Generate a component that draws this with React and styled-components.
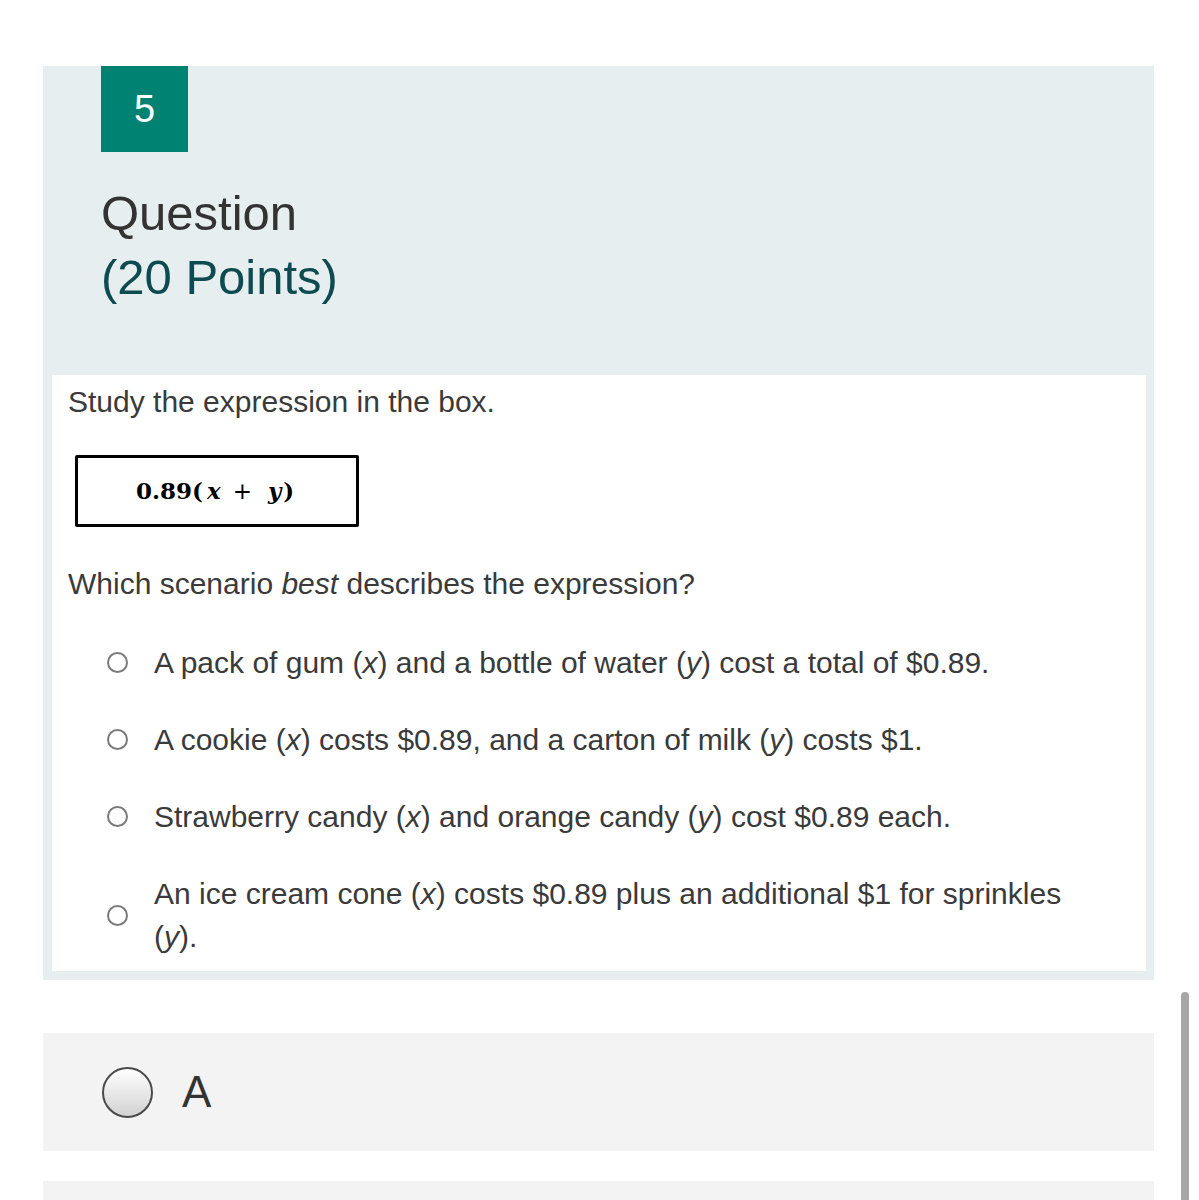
import React from 'react'
import styled, { createGlobalStyle } from 'styled-components';

const Global = createGlobalStyle`
    body {
        margin: 0;
        background: #ffffff;
        font-family: "Liberation Sans", Arial, sans-serif;
    }
`

const Page = styled.div`
    padding: 66px 45px 40px 43px;
    display: flex;
    flex-direction: column;
`

const Card = styled.div`
    background: #e6eeef;
    padding: 0 8px 9px 9px;
`

const Header = styled.div`
    padding: 0 0 66px 49px;
`

const Badge = styled.div`
    width: 87px;
    height: 86px;
    background: #008272;
    color: #ffffff;
    font-size: 38px;
    display: flex;
    align-items: center;
    justify-content: center;
`

const Title = styled.div`
    margin-top: 29px;
    font-size: 49px;
    line-height: 64px;
    color: #333333;
`

const Points = styled.div`
    color: #0d4b50;
`

const Body = styled.div`
    background: #ffffff;
    padding: 10px 16px 13px 16px;
    color: #3a3a3a;
    font-size: 30px;
    line-height: 34px;
`

const Expression = styled.div`
    margin: 36px 0 40px 7px;
    height: 66px;
    width: 220px;
    border: 3px solid #000000;
    border-radius: 2px;
    display: flex;
    align-items: center;
    padding-left: 58px;
    font-family: "DejaVu Serif", "Liberation Serif", serif;
    font-weight: 700;
    font-size: 23px;
    color: #000000;
`

const Var = styled.span`
    font-style: italic;
    margin: 0 ${p => p.$space}px 0 4px;
`

const Op = styled.span`
    font-family: "DejaVu Sans", sans-serif;
    font-weight: 400;
    margin-right: 12px;
`

const Options = styled.div`
    margin-top: 40px;
    display: flex;
    flex-direction: column;
    gap: 34px;
`

const Option = styled.div`
    display: flex;
    align-items: center;
    padding-left: 39px;
`

const SmallRadio = styled.span`
    flex: none;
    width: 17px;
    height: 17px;
    border: 2px solid #7a7a7a;
    border-radius: 50%;
    margin-right: 26px;
`

const OptionText = styled.div`
    max-width: 930px;
    line-height: 43px;
    color: #3a3a3a;
`

const Answer = styled.div`
    margin-top: ${p => p.$gap}px;
    height: 118px;
    background: #f3f3f3;
    display: flex;
    align-items: center;
    padding-left: 59px;
    font-size: 44px;
    color: #333333;
`

const BigRadio = styled.span`
    width: 47px;
    height: 47px;
    border: 2px solid #4a4a4a;
    border-radius: 50%;
    background: linear-gradient(#ffffff, #d2d2d2);
    margin-right: 29px;
`

const Scrollbar = styled.div`
    position: fixed;
    right: 10px;
    top: 992px;
    bottom: 0;
    width: 8px;
    background: #a6a6a6;
    border-radius: 4px 4px 0 0;
`

const options = [
    <>A pack of gum (<i>x</i>) and a bottle of water (<i>y</i>) cost a total of $0.89.</>,
    <>A cookie (<i>x</i>) costs $0.89, and a carton of milk (<i>y</i>) costs $1.</>,
    <>Strawberry candy (<i>x</i>) and orange candy (<i>y</i>) cost $0.89 each.</>,
    <>An ice cream cone (<i>x</i>) costs $0.89 plus an additional $1 for sprinkles (<i>y</i>).</>,
]

const App = () => {
    return (
        <>
            <Global />
            <Page>
                <Card>
                    <Header>
                        <Badge>5</Badge>
                        <Title>
                            Question
                            <Points>(20 Points)</Points>
                        </Title>
                    </Header>
                    <Body>
                        <div>Study the expression in the box.</div>
                        <Expression>
                            0.89(<Var $space={12}>x</Var><Op>+</Op><Var $space={2}>y</Var>)
                        </Expression>
                        <div>Which scenario <i>best</i> describes the expression?</div>
                        <Options>
                            {options.map((o, i) => (
                                <Option key={i}>
                                    <SmallRadio />
                                    <OptionText>{o}</OptionText>
                                </Option>
                            ))}
                        </Options>
                    </Body>
                </Card>
                <Answer $gap={53}>
                    <BigRadio />
                    A
                </Answer>
                <Answer $gap={30} />
            </Page>
            <Scrollbar />
        </>
    )
}

export default App
